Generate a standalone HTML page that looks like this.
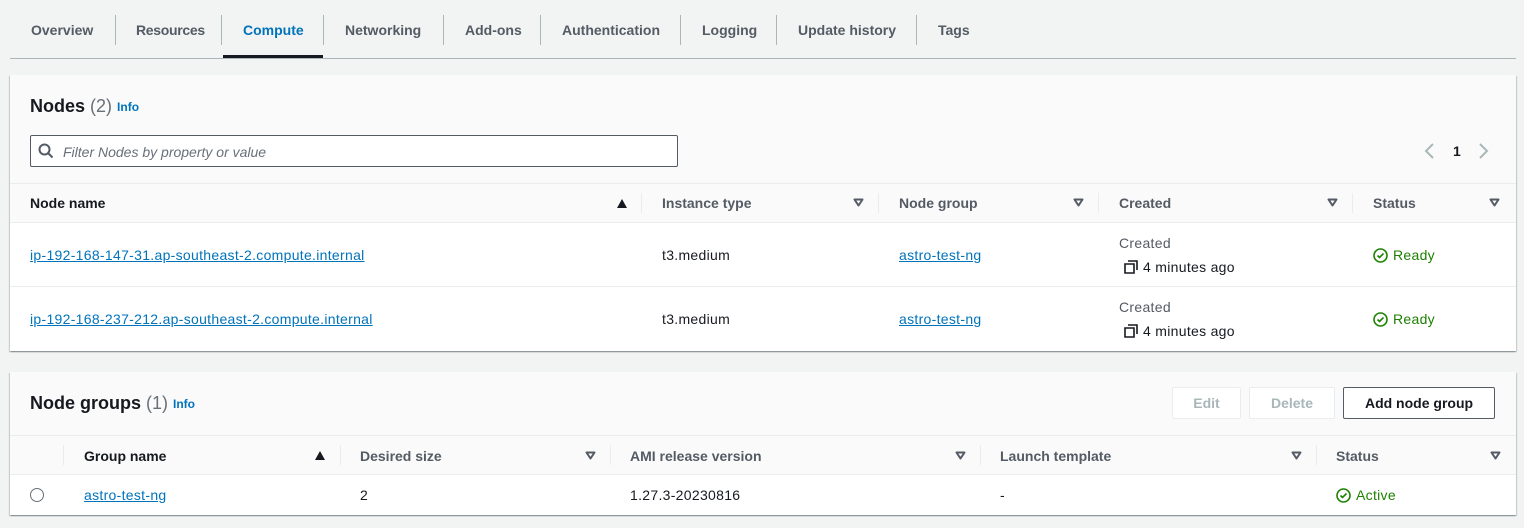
<!DOCTYPE html>
<html><head><meta charset="utf-8"><style>
*{box-sizing:border-box;margin:0;padding:0}
body{width:1524px;height:528px;background:#f2f3f3;font-family:"Liberation Sans",sans-serif;font-size:14px;color:#16191f;position:relative;overflow:hidden}
.a{position:absolute;white-space:nowrap}
.c{font-size:14px;letter-spacing:.3px}
.tab{position:absolute;top:22px;font-weight:bold;color:#545b64;font-size:14px}
.tsep{position:absolute;top:15px;width:1px;height:30px;background:#aab7b8}
.panel{position:absolute;left:10px;width:1506px;background:#fff;box-shadow:0 1px 1px rgba(0,28,36,.3),1px 1px 1px rgba(0,28,36,.15),-1px 1px 1px rgba(0,28,36,.15)}
.hd{position:absolute;left:0;width:100%;background:#fafafa}
.th{position:absolute;font-weight:bold;color:#545b64}
.dk{color:#16191f}
.sep{position:absolute;width:1px;height:20px;background:#eaeded}
.hl{position:absolute;left:0;width:100%;height:1px;background:#eaeded}
.lnk{color:#0073bb;text-decoration:underline}
.ok{color:#1d8102}
.dw{position:absolute}
.tri{position:absolute;width:0;height:0;border-left:5px solid transparent;border-right:5px solid transparent}
.up{border-bottom:9px solid #16191f}
.btn{position:absolute;top:15px;height:32px;border:1px solid #eaeded;border-radius:2px;font-weight:bold;color:#aab7b8;text-align:center;line-height:30px}
</style></head><body>
<div class="tab" style="left:31px">Overview</div><div class="tsep" style="left:115px"></div>
<div class="tab" style="left:136px;letter-spacing:-.3px">Resources</div><div class="tsep" style="left:221px"></div>
<div class="tab" style="left:243px;color:#0073bb">Compute</div><div class="tsep" style="left:323px"></div>
<div class="a" style="left:223px;top:55px;width:100px;height:3px;background:#16191f"></div>
<div class="tab" style="left:345px">Networking</div><div class="tsep" style="left:443px"></div>
<div class="tab" style="left:465px">Add-ons</div><div class="tsep" style="left:540px"></div>
<div class="tab" style="left:562px">Authentication</div><div class="tsep" style="left:680px"></div>
<div class="tab" style="left:702px">Logging</div><div class="tsep" style="left:776px"></div>
<div class="tab" style="left:798px">Update history</div><div class="tsep" style="left:916px"></div>
<div class="tab" style="left:938px">Tags</div>
<div class="a" style="left:10px;top:58px;width:1506px;height:1px;background:#aab7b8"></div>

<div class="panel" style="top:75px;height:276px">
 <div class="hd" style="top:0;height:147px"></div>
 <div class="a" style="left:20px;top:21px;font-size:18px;font-weight:bold">Nodes <span style="font-weight:normal;color:#687078">(2)</span> <span style="font-size:12px;color:#0073bb;vertical-align:1px">Info</span></div>
 <div class="a" style="left:20px;top:60px;width:648px;height:32px;border:1px solid #545b64;border-radius:2px;background:#fff"></div>
 <svg class="a" style="left:28px;top:68px" width="16" height="16" viewBox="0 0 16 16"><circle cx="6.5" cy="6.5" r="5" fill="none" stroke="#545b64" stroke-width="2"/><path d="M10 10l4.5 4.5" stroke="#545b64" stroke-width="2"/></svg>
 <div class="a" style="left:53px;top:69px;font-style:italic;color:#687078;font-size:14px">Filter Nodes by property or value</div>
 <svg class="a" style="left:1413px;top:67px" width="12" height="18"><path d="M10 2L3 9l7 7" fill="none" stroke="#aab7b8" stroke-width="2"/></svg>
 <div class="a" style="left:1443px;top:68px;font-weight:bold;font-size:14px">1</div>
 <svg class="a" style="left:1468px;top:67px" width="12" height="18"><path d="M2 2l7 7-7 7" fill="none" stroke="#aab7b8" stroke-width="2"/></svg>
 <div class="hl" style="top:108px"></div><div class="hl" style="top:147px"></div>
 <div class="th dk" style="left:20px;top:120px">Node name</div><div class="tri up" style="left:607px;top:124px"></div><div class="sep" style="left:631px;top:118px"></div>
 <div class="th" style="left:652px;top:120px">Instance type</div><svg class="dw" style="left:843px;top:123px" width="11" height="9"><path d="M1.5 1.5h8L5.5 7.5z" fill="none" stroke="#545b64" stroke-width="2" stroke-linejoin="round"/></svg><div class="sep" style="left:868px;top:118px"></div>
 <div class="th" style="left:889px;top:120px">Node group</div><svg class="dw" style="left:1063px;top:123px" width="11" height="9"><path d="M1.5 1.5h8L5.5 7.5z" fill="none" stroke="#545b64" stroke-width="2" stroke-linejoin="round"/></svg><div class="sep" style="left:1088px;top:118px"></div>
 <div class="th" style="left:1109px;top:120px">Created</div><svg class="dw" style="left:1317px;top:123px" width="11" height="9"><path d="M1.5 1.5h8L5.5 7.5z" fill="none" stroke="#545b64" stroke-width="2" stroke-linejoin="round"/></svg><div class="sep" style="left:1342px;top:118px"></div>
 <div class="th" style="left:1363px;top:120px">Status</div><svg class="dw" style="left:1479px;top:123px" width="11" height="9"><path d="M1.5 1.5h8L5.5 7.5z" fill="none" stroke="#545b64" stroke-width="2" stroke-linejoin="round"/></svg>

 <div class="a lnk c" style="left:20px;top:172px">ip-192-168-147-31.ap-southeast-2.compute.internal</div>
 <div class="a c" style="left:652px;top:172px">t3.medium</div>
 <div class="a lnk c" style="left:889px;top:172px">astro-test-ng</div>
 <div class="a c" style="left:1109px;top:160px;color:#545b64">Created</div>
 <div class="a c" style="left:1114px;top:184px"><svg width="14" height="14" style="vertical-align:-2px;margin-right:5px"><path d="M4 1h9v9M1 4h9v9H1z" fill="none" stroke="#16191f" stroke-width="1.6"/></svg>4 minutes ago</div>
 <div class="a ok c" style="left:1363px;top:172px"><svg width="15" height="15" style="vertical-align:-3px;margin-right:5px"><circle cx="7.5" cy="7.5" r="6.5" fill="none" stroke="#1d8102" stroke-width="1.6"/><path d="M4.5 7.5l2 2 4-4" fill="none" stroke="#1d8102" stroke-width="1.6"/></svg>Ready</div>
 <div class="hl" style="top:211px"></div>
 <div class="a lnk c" style="left:20px;top:236px">ip-192-168-237-212.ap-southeast-2.compute.internal</div>
 <div class="a c" style="left:652px;top:236px">t3.medium</div>
 <div class="a lnk c" style="left:889px;top:236px">astro-test-ng</div>
 <div class="a c" style="left:1109px;top:224px;color:#545b64">Created</div>
 <div class="a c" style="left:1114px;top:248px"><svg width="14" height="14" style="vertical-align:-2px;margin-right:5px"><path d="M4 1h9v9M1 4h9v9H1z" fill="none" stroke="#16191f" stroke-width="1.6"/></svg>4 minutes ago</div>
 <div class="a ok c" style="left:1363px;top:236px"><svg width="15" height="15" style="vertical-align:-3px;margin-right:5px"><circle cx="7.5" cy="7.5" r="6.5" fill="none" stroke="#1d8102" stroke-width="1.6"/><path d="M4.5 7.5l2 2 4-4" fill="none" stroke="#1d8102" stroke-width="1.6"/></svg>Ready</div>
</div>

<div class="panel" style="top:372px;height:143px">
 <div class="hd" style="top:0;height:102px"></div>
 <div class="a" style="left:20px;top:21px;font-size:18px;font-weight:bold">Node groups <span style="font-weight:normal;color:#687078">(1)</span> <span style="font-size:12px;color:#0073bb;vertical-align:1px">Info</span></div>
 <div class="btn" style="left:1162px;width:69px;background:#fff">Edit</div>
 <div class="btn" style="left:1239px;width:86px;background:#fff">Delete</div>
 <div class="btn" style="left:1333px;width:152px;border-color:#545b64;color:#16191f;background:#fff">Add node group</div>
 <div class="hl" style="top:63px"></div><div class="hl" style="top:102px"></div>
 <div class="sep" style="left:53px;top:73px"></div>
 <div class="th dk" style="left:74px;top:76px">Group name</div><div class="tri up" style="left:305px;top:79px"></div><div class="sep" style="left:330px;top:73px"></div>
 <div class="th" style="left:350px;top:76px">Desired size</div><svg class="dw" style="left:575px;top:79px" width="11" height="9"><path d="M1.5 1.5h8L5.5 7.5z" fill="none" stroke="#545b64" stroke-width="2" stroke-linejoin="round"/></svg><div class="sep" style="left:600px;top:73px"></div>
 <div class="th" style="left:620px;top:76px">AMI release version</div><svg class="dw" style="left:945px;top:79px" width="11" height="9"><path d="M1.5 1.5h8L5.5 7.5z" fill="none" stroke="#545b64" stroke-width="2" stroke-linejoin="round"/></svg><div class="sep" style="left:970px;top:73px"></div>
 <div class="th" style="left:990px;top:76px">Launch template</div><svg class="dw" style="left:1281px;top:79px" width="11" height="9"><path d="M1.5 1.5h8L5.5 7.5z" fill="none" stroke="#545b64" stroke-width="2" stroke-linejoin="round"/></svg><div class="sep" style="left:1306px;top:73px"></div>
 <div class="th" style="left:1326px;top:76px">Status</div><svg class="dw" style="left:1480px;top:79px" width="11" height="9"><path d="M1.5 1.5h8L5.5 7.5z" fill="none" stroke="#545b64" stroke-width="2" stroke-linejoin="round"/></svg>
 <div class="a" style="left:20px;top:116px;width:14px;height:14px;border:1px solid #687078;border-radius:50%"></div>
 <div class="a lnk c" style="left:74px;top:115px">astro-test-ng</div>
 <div class="a c" style="left:350px;top:115px">2</div>
 <div class="a c" style="left:620px;top:115px">1.27.3-20230816</div>
 <div class="a c" style="left:990px;top:115px">-</div>
 <div class="a ok c" style="left:1326px;top:115px"><svg width="15" height="15" style="vertical-align:-3px;margin-right:5px"><circle cx="7.5" cy="7.5" r="6.5" fill="none" stroke="#1d8102" stroke-width="1.6"/><path d="M4.5 7.5l2 2 4-4" fill="none" stroke="#1d8102" stroke-width="1.6"/></svg>Active</div>
</div>
</body></html>
